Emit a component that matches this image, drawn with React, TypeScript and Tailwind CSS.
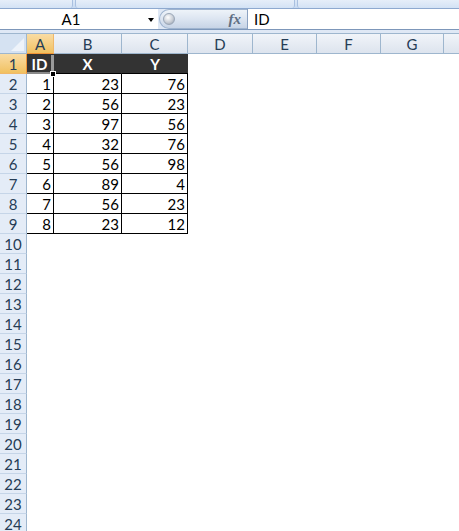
import React from 'react'

const COLS = [
  { key: 'A', w: 'w-[27px]' },
  { key: 'B', w: 'w-[68px]' },
  { key: 'C', w: 'w-[66px]' },
  { key: 'D', w: 'w-[65px]' },
  { key: 'E', w: 'w-[64px]' },
  { key: 'F', w: 'w-[64px]' },
  { key: 'G', w: 'w-[63px]' },
]

const DATA: [number, number, number][] = [
  [1, 23, 76],
  [2, 56, 23],
  [3, 97, 56],
  [4, 32, 76],
  [5, 56, 98],
  [6, 89, 4],
  [7, 56, 23],
  [8, 23, 12],
]

const FONT = { fontFamily: 'Lato, "Open Sans", Arial, sans-serif' }

function RowHeader({ n, active = false }: { n: number; active?: boolean }) {
  return (
    <div
      className={`w-[27px] shrink-0 h-full flex items-center justify-center pt-[2px] text-[15px] border-r border-b ${
        active
          ? 'bg-gradient-to-b from-[#f9dca4] to-[#f1c15f] border-r-[#f29536] border-b-[#f0b86a] text-[#263d56]'
          : 'bg-[#e4ecf7] border-r-[#9eb6ce] border-b-[#c5d5e8] text-[#263d56]'
      }`}
    >
      {n}
    </div>
  )
}

function FormulaBar() {
  return (
    <div className="bg-[#dfe8f5]">
      {/* ribbon bottom edge */}
      <div className="h-[9px] flex border-b border-[#8ea9cf] bg-gradient-to-b from-[#dce8f7] to-[#c8daf1]">
        <div className="w-[73px] border-r border-[#a9c0e0] rounded-br-[3px] bg-gradient-to-b from-[#e6eef9] to-[#d3e2f5]" />
        <div className="w-[2px]" />
        <div className="w-[220px] border-x border-[#a9c0e0] rounded-b-[3px] bg-gradient-to-b from-[#e6eef9] to-[#d3e2f5]" />
        <div className="w-[2px]" />
        <div className="flex-1 border-l border-[#a9c0e0] rounded-bl-[3px] bg-gradient-to-b from-[#e6eef9] to-[#d3e2f5]" />
      </div>
      <div className="h-[21px] flex border-b border-[#7d97ba]">
        <div className="w-[158px] bg-white flex items-center relative">
          <span className="flex-1 text-center text-[15px] text-black pr-[16px] pt-[1px]">A1</span>
          <span className="absolute left-[148px] top-[9px] w-0 h-0 border-x-[3.5px] border-x-transparent border-t-[4px] border-t-black" />
        </div>
        <div className="w-[88px] ml-[1px] rounded-l-full border border-r-0 border-[#9fb4cf] bg-gradient-to-b from-[#eef3f9] via-[#dce5f1] to-[#c7d4e6] flex items-center">
          <span className="ml-[3px] w-[12px] h-[12px] rounded-full bg-[radial-gradient(circle_at_40%_35%,#ffffff,#c9ced6_55%,#8c96a4)] border border-[#9aa7b8]" />
          <span
            className="ml-auto mr-[6px] text-[15px] italic font-bold text-[#5f6f84]"
            style={{ fontFamily: '"Liberation Serif", serif' }}
          >
            fx
          </span>
        </div>
        <div className="flex-1 bg-white border-l border-[#8aa1c1] flex items-center pl-[6px] pt-[1px] text-[15px] text-black">
          ID
        </div>
      </div>
      <div className="h-[3px]" />
    </div>
  )
}

function ColumnHeaders() {
  return (
    <div className="h-[21px] flex border-t border-[#9eb6ce]">
      <div className="w-[27px] shrink-0 border-r border-b border-[#9eb6ce] bg-[#d5e2f2] relative overflow-hidden">
        <span className="absolute right-[2px] bottom-[2px] w-0 h-0 border-l-[13px] border-l-transparent border-b-[13px] border-b-[#eef3fa]" />
      </div>
      {COLS.map((c) => (
        <div
          key={c.key}
          className={`${c.w} shrink-0 flex items-center justify-center pt-[1px] text-[15px] border-r border-b ${
            c.key === 'A'
              ? 'bg-gradient-to-b from-[#f9dca4] to-[#f1c15f] border-r-[#f0b86a] border-b-[#f29536]'
              : 'bg-gradient-to-b from-[#f1f4f9] to-[#dde4ee] border-r-[#9eb6ce] border-b-[#9eb6ce]'
          } text-[#263d56]`}
        >
          {c.key}
        </div>
      ))}
      <div className="flex-1 bg-gradient-to-b from-[#f1f4f9] to-[#dde4ee] border-b border-[#9eb6ce]" />
    </div>
  )
}

const cell = 'shrink-0 border-r border-b border-black flex items-center justify-end pr-[2px] pt-[2px] text-[15px] text-black'

export default function App() {
  const rows = Array.from({ length: 24 }, (_, i) => i + 1)

  return (
    <div className="w-[459px] h-[531px] overflow-hidden bg-white" style={FONT}>
      <FormulaBar />
      <ColumnHeaders />
      <div>
        {rows.map((n) => {
          if (n === 1) {
            return (
              <div key={n} className="h-[20px] flex">
                <RowHeader n={1} active />
                <div className="w-[27px] shrink-0 bg-[#333333] border-b border-black relative flex items-center justify-center pt-[1px] pr-[2px] text-white font-bold text-[15px]">
                  ID
                  <span className="absolute right-0 top-[1px] bottom-[-1px] w-[3px] bg-[#9a9a9a]" />
                  <span className="absolute left-0 right-0 bottom-[-1px] h-[2px] bg-[#8a8a8a]" />
                  <span className="absolute right-[-2px] bottom-[-4px] w-[6px] h-[6px] bg-black border border-white z-10" />
                </div>
                <div className="w-[68px] shrink-0 bg-[#333333] border-r border-[#333333] border-b border-b-black flex items-center justify-center pt-[1px] text-white font-bold text-[15px]">
                  X
                </div>
                <div className="w-[66px] shrink-0 bg-[#333333] border-b border-black flex items-center justify-center pt-[1px] text-white font-bold text-[15px]">
                  Y
                </div>
                <div className="flex-1" />
              </div>
            )
          }
          const d = DATA[n - 2]
          return (
            <div key={n} className="h-[20px] flex">
              <RowHeader n={n} />
              {d ? (
                <>
                  <div className={`w-[27px] ${cell}`}>{d[0]}</div>
                  <div className={`w-[68px] ${cell}`}>{d[1]}</div>
                  <div className={`w-[66px] ${cell}`}>{d[2]}</div>
                </>
              ) : null}
              <div className="flex-1" />
            </div>
          )
        })}
      </div>
    </div>
  )
}
